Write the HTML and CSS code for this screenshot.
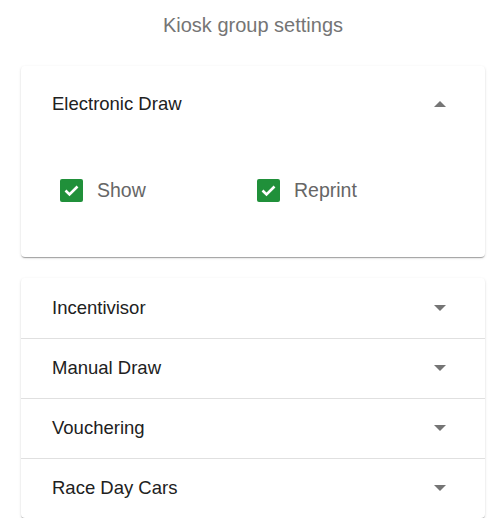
FILE: index.html
```html
<!DOCTYPE html>
<html>
<head>
<meta charset="utf-8">
<link rel="stylesheet" href="styles.css">
</head>
<body>
<div class="page">
  <h1 class="title">Kiosk group settings</h1>
  <div class="card">
    <div class="panel-header expanded">
      <span class="panel-title">Electronic Draw</span>
      <svg class="caret" width="12" height="6" viewBox="0 0 12 6"><path d="M0 6 L6 0 L12 6 Z" fill="#757575"/></svg>
    </div>
    <div class="panel-body">
      <label class="check"><span class="box"><svg width="23" height="23" viewBox="0 0 23 23"><path d="M5.5 11.5 L9.5 15.5 L17.5 7.5" fill="none" stroke="#fff" stroke-width="2.6"/></svg></span><span class="check-label">Show</span></label>
      <label class="check"><span class="box"><svg width="23" height="23" viewBox="0 0 23 23"><path d="M5.5 11.5 L9.5 15.5 L17.5 7.5" fill="none" stroke="#fff" stroke-width="2.6"/></svg></span><span class="check-label">Reprint</span></label>
    </div>
  </div>
  <div class="card">
    <div class="panel-header row">
      <span class="panel-title">Incentivisor</span>
      <svg class="caret" width="12" height="6" viewBox="0 0 12 6"><path d="M0 0 L12 0 L6 6 Z" fill="#757575"/></svg>
    </div>
    <div class="panel-header row">
      <span class="panel-title">Manual Draw</span>
      <svg class="caret" width="12" height="6" viewBox="0 0 12 6"><path d="M0 0 L12 0 L6 6 Z" fill="#757575"/></svg>
    </div>
    <div class="panel-header row">
      <span class="panel-title">Vouchering</span>
      <svg class="caret" width="12" height="6" viewBox="0 0 12 6"><path d="M0 0 L12 0 L6 6 Z" fill="#757575"/></svg>
    </div>
    <div class="panel-header row">
      <span class="panel-title">Race Day Cars</span>
      <svg class="caret" width="12" height="6" viewBox="0 0 12 6"><path d="M0 0 L12 0 L6 6 Z" fill="#757575"/></svg>
    </div>
  </div>
</div>
</body>
</html>
```
FILE: styles.css
```css
html, body {
  margin: 0;
  padding: 0;
  background: #fff;
  font-family: "Liberation Sans", Arial, sans-serif;
}
.page {
  padding: 13px 19px 0 21px;
  display: flex;
  flex-direction: column;
  gap: 21px;
}
.title {
  margin: 0 0 8px 0;
  font-size: 20px;
  line-height: 24px;
  font-weight: normal;
  color: #757575;
  text-align: center;
}
.card {
  background: #fff;
  border-radius: 4px;
  box-shadow: 0 2px 1px -1px rgba(0,0,0,.2), 0 1px 1px 0 rgba(0,0,0,.14), 0 1px 3px 0 rgba(0,0,0,.12);
  display: flex;
  flex-direction: column;
}
.panel-header {
  display: flex;
  align-items: center;
  justify-content: space-between;
  padding: 0 39px 0 31px;
}
.panel-header.expanded {
  height: 76px;
}
.panel-header.row {
  height: 60px;
  border-top: 1px solid #e0e0e0;
  padding-bottom: 2px;
  box-sizing: border-box;
}
.panel-header.row:first-child {
  border-top: none;
  padding-bottom: 1px;
}
.panel-title {
  font-size: 18.5px;
  color: #212121;
}
.caret {
  display: block;
}
.panel-body {
  display: grid;
  grid-template-columns: 197px 197px;
  padding: 37px 39px 55px 39px;
}
.check {
  display: flex;
  align-items: center;
  gap: 14px;
}
.box {
  width: 23px;
  height: 23px;
  border-radius: 2px;
  background: #20903a;
  display: block;
}
.box svg {
  display: block;
}
.check-label {
  font-size: 19.5px;
  color: #666;
}
```
